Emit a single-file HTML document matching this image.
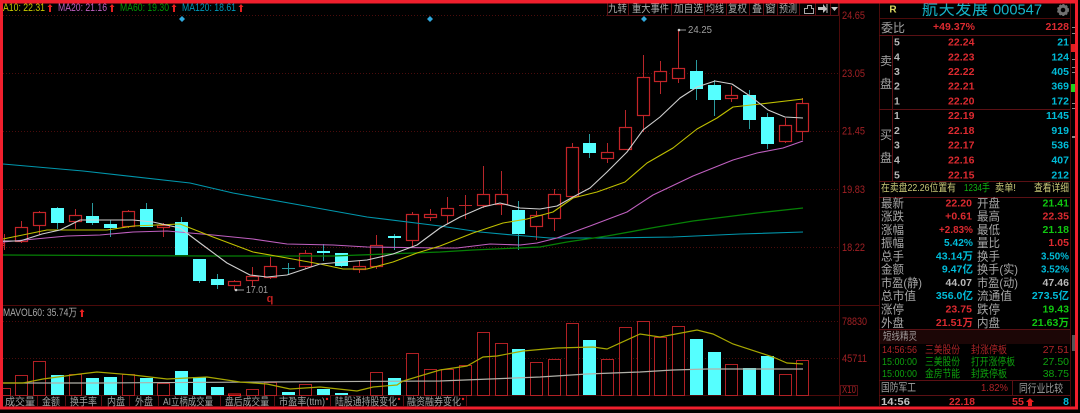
<!DOCTYPE html>
<html lang="zh">
<head>
<meta charset="utf-8">
<title>航天发展 000547</title>
<style>
html,body{margin:0;padding:0;background:#000;width:1080px;height:413px;overflow:hidden}
svg{display:block;position:absolute;left:0;top:0}
text{font-family:"Liberation Sans","WenQuanYi Zen Hei","Noto Sans CJK SC",sans-serif;dominant-baseline:central}
.l{font-size:12px;fill:#a6a6a6}
.n{font-size:10.5px;font-weight:bold;letter-spacing:.05px}
.r{fill:#dc2a30}.g{fill:#10c810}.c{fill:#00bcd8}.w{fill:#b8b8b8}
.e{text-anchor:end}
.m{text-anchor:middle}
.a{font-size:11px;fill:#a02024}
.t{font-size:10.5px;fill:#a0a0a0}
.b{font-size:11px;fill:#a8a8a8}
</style>
</head>
<body>
<svg width="1080" height="413" viewBox="0 0 1080 413" xmlns="http://www.w3.org/2000/svg">
<rect width="1080" height="413" fill="#000"/>

<!-- grid -->
<g stroke="#4a0c0c" stroke-width="1" stroke-dasharray="1 2">
<path d="M3 15.500H839M3 73.500H839M3 131.500H839M3 189.500H839M3 247.500H839M3 321.500H839M3 358.500H839"/>
</g>
<path d="M839.500 3V406M3 305.500H879M3 395.500H839M879.500 3V406M1070.500 3V406M879 18.500H1070" stroke="#4c0a0a" fill="none"/>

<!-- volume bars -->
<g fill="#000" stroke="#b02024">
<rect x="-1.500" y="388.500" width="12" height="7"/>
<rect x="15.500" y="375.500" width="12" height="20"/>
<rect x="33.500" y="361.500" width="12" height="34"/>
<rect x="69.500" y="374.500" width="12" height="21"/>
<rect x="122.500" y="374.500" width="12" height="21"/>
<rect x="157.500" y="383.500" width="12" height="12"/>
<rect x="228.500" y="394" width="12" height="1.500" stroke="#f02020"/>
<rect x="246.500" y="389.500" width="12" height="6"/>
<rect x="264.500" y="382.500" width="12" height="13"/>
<rect x="299.500" y="384.500" width="12" height="11"/>
<rect x="370.500" y="372.500" width="12" height="23"/>
<rect x="406.500" y="353.500" width="12" height="42"/>
<rect x="424.500" y="369.500" width="12" height="26"/>
<rect x="441.500" y="369.500" width="12" height="26"/>
<rect x="459.500" y="365.500" width="12" height="30"/>
<rect x="477.500" y="332.500" width="12" height="63"/>
<rect x="495.500" y="343.500" width="12" height="52"/>
<rect x="530.500" y="362.500" width="12" height="33"/>
<rect x="548.500" y="359.500" width="12" height="36"/>
<rect x="566.500" y="323.500" width="12" height="72"/>
<rect x="601.500" y="359.500" width="12" height="36"/>
<rect x="619.500" y="327.500" width="12" height="68"/>
<rect x="637.500" y="321.500" width="12" height="74"/>
<rect x="654.500" y="337.500" width="12" height="58"/>
<rect x="672.500" y="326.500" width="12" height="69"/>
<rect x="725.500" y="364.500" width="12" height="31"/>
<rect x="779.500" y="374.500" width="12" height="21"/>
<rect x="796.500" y="360.500" width="12" height="35"/>
</g>
<g fill="#55ffff">
<rect x="51" y="375" width="13" height="20"/>
<rect x="86" y="378" width="13" height="17"/>
<rect x="104" y="377" width="13" height="18"/>
<rect x="140" y="378" width="13" height="17"/>
<rect x="175" y="371" width="13" height="24"/>
<rect x="193" y="377" width="13" height="18"/>
<rect x="211" y="387" width="13" height="8"/>
<rect x="282" y="392" width="13" height="3"/>
<rect x="317" y="389" width="13" height="6"/>
<rect x="335" y="393" width="13" height="2"/>
<rect x="388" y="378" width="13" height="17"/>
<rect x="512" y="349" width="13" height="46"/>
<rect x="583" y="340" width="13" height="55"/>
<rect x="690" y="339" width="13" height="56"/>
<rect x="708" y="352" width="13" height="43"/>
<rect x="743" y="368" width="13" height="27"/>
<rect x="761" y="356" width="13" height="39"/>
</g>
<polyline fill="none" stroke="#b0b0a8" stroke-width="1.200" points="3,383 100,383 263,382 440,381 490,379 540,377 587,374 640,372 673,370 707,369 803,369"/>
<polyline fill="none" stroke="#a8a800" stroke-width="1.200" points="3,383 23,383 43,379 80,374 97,372 133,375 167,379 207,377 240,382 267,384 290,389 320,387 357,391 373,387 397,385 403,381 440,370 467,366 483,357 497,356 523,351 557,348 593,347 607,349 640,334 660,337 697,330 713,334 733,344 773,357 787,363 803,364"/>

<!-- candle wicks -->
<path fill="none" stroke="#b8262a" d="M4.500 234V243M4.500 245V250M21.500 221V227M21.500 242V243M39.500 211V212M39.500 225V235M75.500 209V215M75.500 221V229M128.500 210V211M128.500 227V228M163.500 223V225M163.500 227V237M234.500 280V281M234.500 286V290M252.500 267V276M252.500 281V287M270.500 257V266M270.500 277V279M305.500 250V253M305.500 267V269M359.500 261V266M359.500 269V273M376.500 235V245M376.500 267V269M412.500 212V215M412.500 240V247M430.500 209V214M430.500 217V221M447.500 197V208M447.500 215V224M465.500 195V219M459 205.500H472M483.500 166V195M483.500 205V208M501.500 171V194M501.500 204V215M536.500 211V216M536.500 226V240M554.500 189V195M554.500 218V231M572.500 143V147M607.500 143V152M607.500 158V163M625.500 110V128M643.500 55V77M643.500 115V132M660.500 61V71M660.500 81V94M678.500 30V69M678.500 79V83M731.500 86V95M731.500 98V102M785.500 118V125M785.500 142V143M802.500 98V103M802.500 131V140"/>
<path fill="none" stroke="#2a9a9e" d="M57.500 207V229M92.500 203V225M110.500 220V237M146.500 203V227M181.500 217V255M199.500 259V283M217.500 274V289M288.500 263V275M282 268.500H295M323.500 244V261M341.500 253V267M394.500 234V250M518.500 201V250M589.500 134V158M696.500 60V100M714.500 80V116M749.500 90V129M767.500 113V149"/>

<!-- candle bodies -->
<g fill="#000" stroke="#c42428" stroke-width="1.200">
<rect x="-1.500" y="243.500" width="6" height="2"/>
<rect x="15.500" y="227.500" width="12" height="14"/>
<rect x="33.500" y="212.500" width="12" height="13"/>
<rect x="69.500" y="215.500" width="12" height="6"/>
<rect x="122.500" y="211.500" width="12" height="15"/>
<rect x="157.500" y="225.500" width="12" height="2"/>
<rect x="228.500" y="281.500" width="12" height="4"/>
<rect x="246.500" y="276.500" width="12" height="4"/>
<rect x="264.500" y="266.500" width="12" height="11"/>
<rect x="299.500" y="253.500" width="12" height="13"/>
<rect x="353.500" y="266.500" width="12" height="3"/>
<rect x="370.500" y="245.500" width="12" height="21"/>
<rect x="406.500" y="214.500" width="12" height="26"/>
<rect x="424.500" y="214.500" width="12" height="3"/>
<rect x="441.500" y="208.500" width="12" height="7"/>
<rect x="477.500" y="194.500" width="12" height="11"/>
<rect x="495.500" y="194.500" width="12" height="10"/>
<rect x="530.500" y="215.500" width="12" height="11"/>
<rect x="548.500" y="194.500" width="12" height="24"/>
<rect x="566.500" y="147.500" width="12" height="49"/>
<rect x="601.500" y="152.500" width="12" height="6"/>
<rect x="619.500" y="127.500" width="12" height="22"/>
<rect x="637.500" y="77.500" width="12" height="38"/>
<rect x="654.500" y="71.500" width="12" height="10"/>
<rect x="672.500" y="68.500" width="12" height="10"/>
<rect x="725.500" y="95.500" width="12" height="3"/>
<rect x="779.500" y="125.500" width="12" height="16"/>
<rect x="796.500" y="103.500" width="12" height="28"/>
</g>
<g fill="#55ffff">
<rect x="51" y="208" width="13" height="15"/>
<rect x="86" y="216" width="13" height="7"/>
<rect x="104" y="224" width="13" height="4"/>
<rect x="140" y="209" width="13" height="18"/>
<rect x="175" y="222" width="13" height="33"/>
<rect x="193" y="259" width="13" height="22"/>
<rect x="211" y="279" width="13" height="6"/>
<rect x="317" y="251" width="13" height="2"/>
<rect x="335" y="253" width="13" height="13"/>
<rect x="388" y="236" width="13" height="2"/>
<rect x="512" y="210" width="13" height="24"/>
<rect x="583" y="143" width="13" height="10"/>
<rect x="690" y="71" width="13" height="18"/>
<rect x="708" y="85" width="13" height="15"/>
<rect x="743" y="95" width="13" height="25"/>
<rect x="761" y="117" width="13" height="27"/>
</g>

<!-- moving averages -->
<g fill="none" stroke-width="1.100" stroke-linejoin="round">
<polyline stroke="#0097ad" points="3,164 83,171 190,183 233,193 300,205 367,217 440,226 480,232 513,235 550,238 607,238 673,237 740,234 803,232"/>
<polyline stroke="#068006" stroke-width="1.300" points="3,255 213,256 333,256 440,252 473,250 540,247 567,242 607,236 657,227 693,221 757,213 803,208"/>
<polyline stroke="#c060c0" points="3,242 67,236 100,235 133,232 167,231 213,235 253,239 287,244 333,245 367,247 440,248 457,248 490,244 520,245 537,243 557,238 590,226 627,212 653,195 693,176 733,160 757,153 783,148 803,141"/>
<polyline stroke="#c0c000" points="3,239 47,230 107,230 133,226 180,224 213,237 253,252 287,258 320,264 343,269 367,269 393,262 417,253 440,246 473,233 503,223 527,219 553,212 573,198 597,192 625,182 647,163 673,148 697,129 717,118 733,107 760,104 803,99"/>
<polyline stroke="#cfcfcf" points="3,241 20,241 42,234 60,230 80,220 133,220 153,222 180,228 200,243 227,263 250,275 267,277 287,275 320,264 343,262 367,260 393,254 417,245 440,228 460,217 483,207 500,203 520,208 540,209 557,206 573,197 590,188 607,172 627,152 643,130 660,117 680,98 697,87 715,81 732,84 750,96 768,110 785,117 803,118"/>
</g>

<!-- high / low labels -->
<path d="M679 30H686M236 290H244" stroke="#999"/>
<circle cx="679" cy="30" r="1.300" fill="#ccc"/><circle cx="236" cy="290" r="1.300" fill="#ccc"/>
<text x="688" y="30" class="t" textLength="24" lengthAdjust="spacingAndGlyphs">24.25</text>
<text x="246" y="290" class="t" textLength="22" lengthAdjust="spacingAndGlyphs">17.01</text>
<text x="270" y="299" style="font-size:11px;font-weight:bold;fill:#c02020" class="m">q</text>

<!-- diamonds -->
<g fill="#30a8dc">
<path d="M182 16l3 3-3 3-3-3z"/>
<path d="M430 16l3 3-3 3-3-3z"/>
<path d="M644 16l3 3-3 3-3-3z"/>
</g>

<!-- MA legend -->
<g style="font-size:11px">
<text x="3" y="8" fill="#c8c800" textLength="42" lengthAdjust="spacingAndGlyphs">A10: 22.31</text>
<text x="58" y="8" fill="#c060c0" textLength="49" lengthAdjust="spacingAndGlyphs">MA20: 21.16</text>
<text x="120" y="8" fill="#049804" textLength="49" lengthAdjust="spacingAndGlyphs">MA60: 19.30</text>
<text x="182" y="8" fill="#0098b8" textLength="54" lengthAdjust="spacingAndGlyphs">MA120: 18.61</text>
<text x="3" y="313" fill="#a8a8a8" textLength="74" lengthAdjust="spacingAndGlyphs">MAVOL60: 35.74万</text>
</g>
<g fill="#e82020">
<path d="M50 4l2.500 3H51V12H49V7H47.500z"/>
<path d="M112 4l2.500 3H113V12H111V7H109.500z"/>
<path d="M174 4l2.500 3H175V12H173V7H171.500z"/>
<path d="M241 4l2.500 3H242V12H240V7H238.500z"/>
<path d="M82 309l2.500 3H83V317H81V312H79.500z"/>
</g>

<!-- toolbar -->
<path fill="#000" stroke="#5a1014" d="M607.500 3.500V15.500H838.500V3.500M628.500 3.500V15.500M671.500 3.500V15.500M704.500 3.500V15.500M726.500 3.500V15.500M749.500 3.500V15.500M763.500 3.500V15.500M777.500 3.500V15.500M799.500 3.500V15.500M815.500 3.500V15.500M830.500 3.500V15.500"/>
<text x="608" y="9" class="b" textLength="19" lengthAdjust="spacingAndGlyphs">九转</text>
<text x="632" y="9" class="b" textLength="37" lengthAdjust="spacingAndGlyphs">重大事件</text>
<text x="674" y="9" class="b" textLength="29" lengthAdjust="spacingAndGlyphs">加自选</text>
<text x="706" y="9" class="b" textLength="18" lengthAdjust="spacingAndGlyphs">均线</text>
<text x="728" y="9" class="b" textLength="19" lengthAdjust="spacingAndGlyphs">复权</text>
<text x="752" y="9" class="b" textLength="10" lengthAdjust="spacingAndGlyphs">叠</text>
<text x="765" y="9" class="b" textLength="11">窗</text>
<text x="779" y="9" class="b" textLength="18" lengthAdjust="spacingAndGlyphs">预测</text>
<path d="M804.500 13.500V8.500H807.500V5.500H811.500V8.500H813.500V13.500Z" fill="none" stroke="#a8a8a8"/>
<path d="M818 7H823V4L827 9 823 13V10H818Z" fill="#c0c0c0"/>
<path d="M827 4V13" stroke="#c0c0c0"/>
<path d="M831 7H838L834.500 11Z" fill="#c8c8c8"/>

<!-- axis -->
<text class="a" x="842" y="16" textLength="23" lengthAdjust="spacingAndGlyphs">24.65</text>
<text class="a" x="842" y="74" textLength="23" lengthAdjust="spacingAndGlyphs">23.05</text>
<text class="a" x="842" y="131.500" textLength="23" lengthAdjust="spacingAndGlyphs">21.45</text>
<text class="a" x="842" y="190" textLength="23" lengthAdjust="spacingAndGlyphs">19.83</text>
<text class="a" x="842" y="248" textLength="23" lengthAdjust="spacingAndGlyphs">18.22</text>
<text class="a" x="842" y="322" textLength="25" lengthAdjust="spacingAndGlyphs">78830</text>
<text class="a" x="842" y="359" textLength="25" lengthAdjust="spacingAndGlyphs">45711</text>
<text class="a" x="842" y="390" textLength="14" lengthAdjust="spacingAndGlyphs">X10</text>
<rect x="840.500" y="385.500" width="17" height="10" fill="none" stroke="#5a1014"/>

<!-- bottom tabs -->
<path stroke="#5a1014" d="M37.500 396V406M65.500 396V406M101.500 396V406M129.500 396V406M158.500 396V406M220.500 396V406M274.500 396V406M330.500 396V406M403.500 396V406M466.500 396V406"/>
<text class="t" x="5" y="402" textLength="30" lengthAdjust="spacingAndGlyphs">成交量</text>
<text class="t" x="42" y="402" textLength="18" lengthAdjust="spacingAndGlyphs">金额</text>
<text class="t" x="70" y="402" textLength="27" lengthAdjust="spacingAndGlyphs">换手率</text>
<text class="t" x="107" y="402" textLength="18" lengthAdjust="spacingAndGlyphs">内盘</text>
<text class="t" x="135" y="402" textLength="18" lengthAdjust="spacingAndGlyphs">外盘</text>
<text class="t" x="163" y="402" textLength="50" lengthAdjust="spacingAndGlyphs">AI立柄成交量</text>
<text class="t" x="225" y="402" textLength="44" lengthAdjust="spacingAndGlyphs">盘后成交量</text>
<text class="t" x="279" y="402" textLength="46" lengthAdjust="spacingAndGlyphs">市盈率(ttm)</text>
<text class="t" x="335" y="402" textLength="62" lengthAdjust="spacingAndGlyphs">陆股通持股变化</text>
<text class="t" x="407" y="402" textLength="54" lengthAdjust="spacingAndGlyphs">融资融券变化</text>
<circle cx="327" cy="399" r="1.200" fill="#e82020"/><circle cx="399" cy="399" r="1.200" fill="#e82020"/><circle cx="463" cy="399" r="1.200" fill="#e82020"/>

<!-- right panel -->
<text x="893" y="10" style="font-size:10px;font-weight:bold;fill:#d8d860" class="m">R</text>
<text x="922" y="10" style="font-size:16px;fill:#14b4c8" textLength="66">航天发展</text>
<text x="993" y="10" style="font-size:15px;fill:#14b4c8" textLength="49" lengthAdjust="spacingAndGlyphs">000547</text>
<circle cx="1063" cy="10" r="3.800" fill="none" stroke="#707070" stroke-width="3"/>
<circle cx="1063" cy="10" r="5.200" fill="none" stroke="#707070" stroke-width="1.600" stroke-dasharray="2 1.400"/>

<path fill="none" stroke="#5a1014" d="M879 35.500H1070M879 109.500H1070M879 181.500H1070M879 197.500H1070M892.500 35V181M879 329.500H1070M879 380.500H1070M879 395.500H1070M1012.500 381V395"/>

<text class="l" x="881" y="28" textLength="24" lengthAdjust="spacingAndGlyphs">委比</text>
<text class="n r" x="933" y="27" textLength="42" lengthAdjust="spacingAndGlyphs">+49.37%</text>
<text class="n r e" x="1069" y="27">2128</text>

<text class="l m" x="886" y="61">卖</text><text class="l m" x="886" y="84">盘</text>
<text class="l m" x="886" y="135">买</text><text class="l m" x="886" y="158">盘</text>

<text class="n w" x="894" y="42.300">5</text><text class="n r" x="948" y="42.300">22.24</text><text class="n c e" x="1069" y="42.300">21</text>
<text class="n w" x="894" y="57.300">4</text><text class="n r" x="948" y="57.300">22.23</text><text class="n c e" x="1069" y="57.300">124</text>
<text class="n w" x="894" y="72">3</text><text class="n r" x="948" y="72">22.22</text><text class="n c e" x="1069" y="72">405</text>
<text class="n w" x="894" y="86.700">2</text><text class="n r" x="948" y="86.700">22.21</text><text class="n c e" x="1069" y="86.700">369</text>
<text class="n w" x="894" y="101.300">1</text><text class="n r" x="948" y="101.300">22.20</text><text class="n c e" x="1069" y="101.300">172</text>
<text class="n w" x="894" y="116">1</text><text class="n r" x="948" y="116">22.19</text><text class="n c e" x="1069" y="116">1145</text>
<text class="n w" x="894" y="131">2</text><text class="n r" x="948" y="131">22.18</text><text class="n c e" x="1069" y="131">919</text>
<text class="n w" x="894" y="145.700">3</text><text class="n r" x="948" y="145.700">22.17</text><text class="n c e" x="1069" y="145.700">536</text>
<text class="n w" x="894" y="160.300">4</text><text class="n r" x="948" y="160.300">22.16</text><text class="n c e" x="1069" y="160.300">407</text>
<text class="n w" x="894" y="175.300">5</text><text class="n r" x="948" y="175.300">22.15</text><text class="n c e" x="1069" y="175.300">212</text>

<g style="font-size:10.5px">
<text x="881" y="188" fill="#c8c878" textLength="75" lengthAdjust="spacingAndGlyphs">在卖盘22.26位置有</text>
<text x="964" y="188" fill="#10b010" textLength="26" lengthAdjust="spacingAndGlyphs">1234手</text>
<text x="995" y="188" fill="#c8c878" textLength="21" lengthAdjust="spacingAndGlyphs">卖单!</text>
<text x="1034" y="188" fill="#c8c878" textLength="35" lengthAdjust="spacingAndGlyphs">查看详细</text>
</g>

<text class="l" x="881" y="203.300" textLength="23" lengthAdjust="spacingAndGlyphs">最新</text><text class="n r e" x="972" y="203.300">22.20</text>
<text class="l" x="977" y="203.300" textLength="23" lengthAdjust="spacingAndGlyphs">开盘</text><text class="n g e" x="1069" y="203.300">21.41</text>
<text class="l" x="881" y="216.700" textLength="23" lengthAdjust="spacingAndGlyphs">涨跌</text><text class="n r e" x="972" y="216.700">+0.61</text>
<text class="l" x="977" y="216.700" textLength="23" lengthAdjust="spacingAndGlyphs">最高</text><text class="n r e" x="1069" y="216.700">22.35</text>
<text class="l" x="881" y="230" textLength="23" lengthAdjust="spacingAndGlyphs">涨幅</text><text class="n r e" x="973" y="230" textLength="34" lengthAdjust="spacingAndGlyphs">+2.83%</text>
<text class="l" x="977" y="230" textLength="23" lengthAdjust="spacingAndGlyphs">最低</text><text class="n g e" x="1069" y="230">21.18</text>
<text class="l" x="881" y="243" textLength="23" lengthAdjust="spacingAndGlyphs">振幅</text><text class="n c e" x="973" y="243" textLength="29" lengthAdjust="spacingAndGlyphs">5.42%</text>
<text class="l" x="977" y="243" textLength="23" lengthAdjust="spacingAndGlyphs">量比</text><text class="n r e" x="1069" y="243">1.05</text>
<text class="l" x="881" y="256.700" textLength="23" lengthAdjust="spacingAndGlyphs">总手</text><text class="n c e" x="973" y="256.700">43.14万</text>
<text class="l" x="977" y="256.700" textLength="23" lengthAdjust="spacingAndGlyphs">换手</text><text class="n c e" x="1069" y="256.700" textLength="28" lengthAdjust="spacingAndGlyphs">3.50%</text>
<text class="l" x="881" y="269.700" textLength="23" lengthAdjust="spacingAndGlyphs">金额</text><text class="n c e" x="973" y="269.700">9.47亿</text>
<text class="l" x="977" y="269.700" textLength="41" lengthAdjust="spacingAndGlyphs">换手(实)</text><text class="n c e" x="1069" y="269.700" textLength="28" lengthAdjust="spacingAndGlyphs">3.52%</text>
<text class="l" x="881" y="283" textLength="41" lengthAdjust="spacingAndGlyphs">市盈(静)</text><text class="n w e" x="972" y="283">44.07</text>
<text class="l" x="977" y="283" textLength="41" lengthAdjust="spacingAndGlyphs">市盈(动)</text><text class="n w e" x="1069" y="283">47.46</text>
<text class="l" x="881" y="296" textLength="35" lengthAdjust="spacingAndGlyphs">总市值</text><text class="n c e" x="973" y="296">356.0亿</text>
<text class="l" x="977" y="296" textLength="35" lengthAdjust="spacingAndGlyphs">流通值</text><text class="n c e" x="1069" y="296">273.5亿</text>
<text class="l" x="881" y="309.300" textLength="23" lengthAdjust="spacingAndGlyphs">涨停</text><text class="n r e" x="972" y="309.300">23.75</text>
<text class="l" x="977" y="309.300" textLength="23" lengthAdjust="spacingAndGlyphs">跌停</text><text class="n g e" x="1069" y="309.300">19.43</text>
<text class="l" x="881" y="323" textLength="23" lengthAdjust="spacingAndGlyphs">外盘</text><text class="n r e" x="973" y="323">21.51万</text>
<text class="l" x="977" y="323" textLength="23" lengthAdjust="spacingAndGlyphs">内盘</text><text class="n g e" x="1069" y="323">21.63万</text>

<rect x="880" y="330" width="190" height="14" fill="#1c0606"/>
<text x="883" y="336.500" style="font-size:10.5px;fill:#a09a9a" textLength="34" lengthAdjust="spacingAndGlyphs">短线精灵</text>
<g style="font-size:10.5px">
<text x="882" y="350" fill="#b02428" textLength="35" lengthAdjust="spacingAndGlyphs">14:56:56</text>
<text x="925" y="350" fill="#b02428" textLength="35" lengthAdjust="spacingAndGlyphs">三美股份</text>
<text x="971" y="350" fill="#b02428" textLength="36" lengthAdjust="spacingAndGlyphs">封涨停板</text>
<text x="1069" y="350" fill="#b02428" class="e">27.51</text>
<text x="882" y="362" fill="#0ea00e" textLength="35" lengthAdjust="spacingAndGlyphs">15:00:00</text>
<text x="925" y="362" fill="#0ea00e" textLength="35" lengthAdjust="spacingAndGlyphs">三美股份</text>
<text x="971" y="362" fill="#0ea00e" textLength="44" lengthAdjust="spacingAndGlyphs">打开涨停板</text>
<text x="1069" y="362" fill="#0ea00e" class="e">27.50</text>
<text x="882" y="374" fill="#0ea00e" textLength="35" lengthAdjust="spacingAndGlyphs">15:00:00</text>
<text x="925" y="374" fill="#0ea00e" textLength="35" lengthAdjust="spacingAndGlyphs">金房节能</text>
<text x="971" y="374" fill="#0ea00e" textLength="36" lengthAdjust="spacingAndGlyphs">封跌停板</text>
<text x="1069" y="374" fill="#0ea00e" class="e">38.75</text>
</g>
<text x="881" y="388" style="font-size:11px;fill:#a0a0a0" textLength="35" lengthAdjust="spacingAndGlyphs">国防军工</text>
<text x="981" y="388" style="font-size:10.5px;fill:#b02428" textLength="27" lengthAdjust="spacingAndGlyphs">1.82%</text>
<text x="1019" y="389" style="font-size:11px;fill:#a0a0a0" textLength="44" lengthAdjust="spacingAndGlyphs">同行业比较</text>

<text class="n" x="881" y="402" fill="#c0c0c0" textLength="29" lengthAdjust="spacingAndGlyphs">14:56</text>
<text class="n r" x="949" y="402" textLength="26" lengthAdjust="spacingAndGlyphs">22.18</text>
<text class="n r" x="1012" y="402" textLength="12" lengthAdjust="spacingAndGlyphs">55</text>
<path d="M1030 398l4 4H1032V406H1028V402H1026z" fill="#e82020"/>
<text class="n c e" x="1069" y="402">8</text>

<!-- strip fragments -->
<g fill="#8a8a8a">
<rect x="1072" y="27" width="3" height="1"/><rect x="1072" y="33" width="3" height="1"/>
<rect x="1072" y="59" width="3" height="1"/><rect x="1072" y="67" width="3" height="1"/>
<rect x="1072" y="72" width="3" height="1"/><rect x="1072" y="103" width="3" height="1"/>
<rect x="1072" y="108" width="3" height="1"/><rect x="1072" y="136" width="3" height="2"/>
<rect x="1072" y="335" width="3" height="16" fill="#555"/>
</g>
<rect x="1071" y="44" width="4" height="8" fill="#e02020"/>
<rect x="1071" y="84" width="4" height="8" fill="#20d020"/>

<!-- outer red frame -->
<rect x="0" y="0" width="1078" height="3.500" fill="#f01f2d"/>
<rect x="0" y="0" width="3" height="409" fill="#f01f2d"/>
<rect x="1075" y="0" width="3" height="409" fill="#f01f2d"/>
<rect x="0" y="406.500" width="1078" height="3" fill="#f01f2d"/>
<rect x="0" y="410" width="1080" height="3" fill="#000"/>
</svg>
</body>
</html>
